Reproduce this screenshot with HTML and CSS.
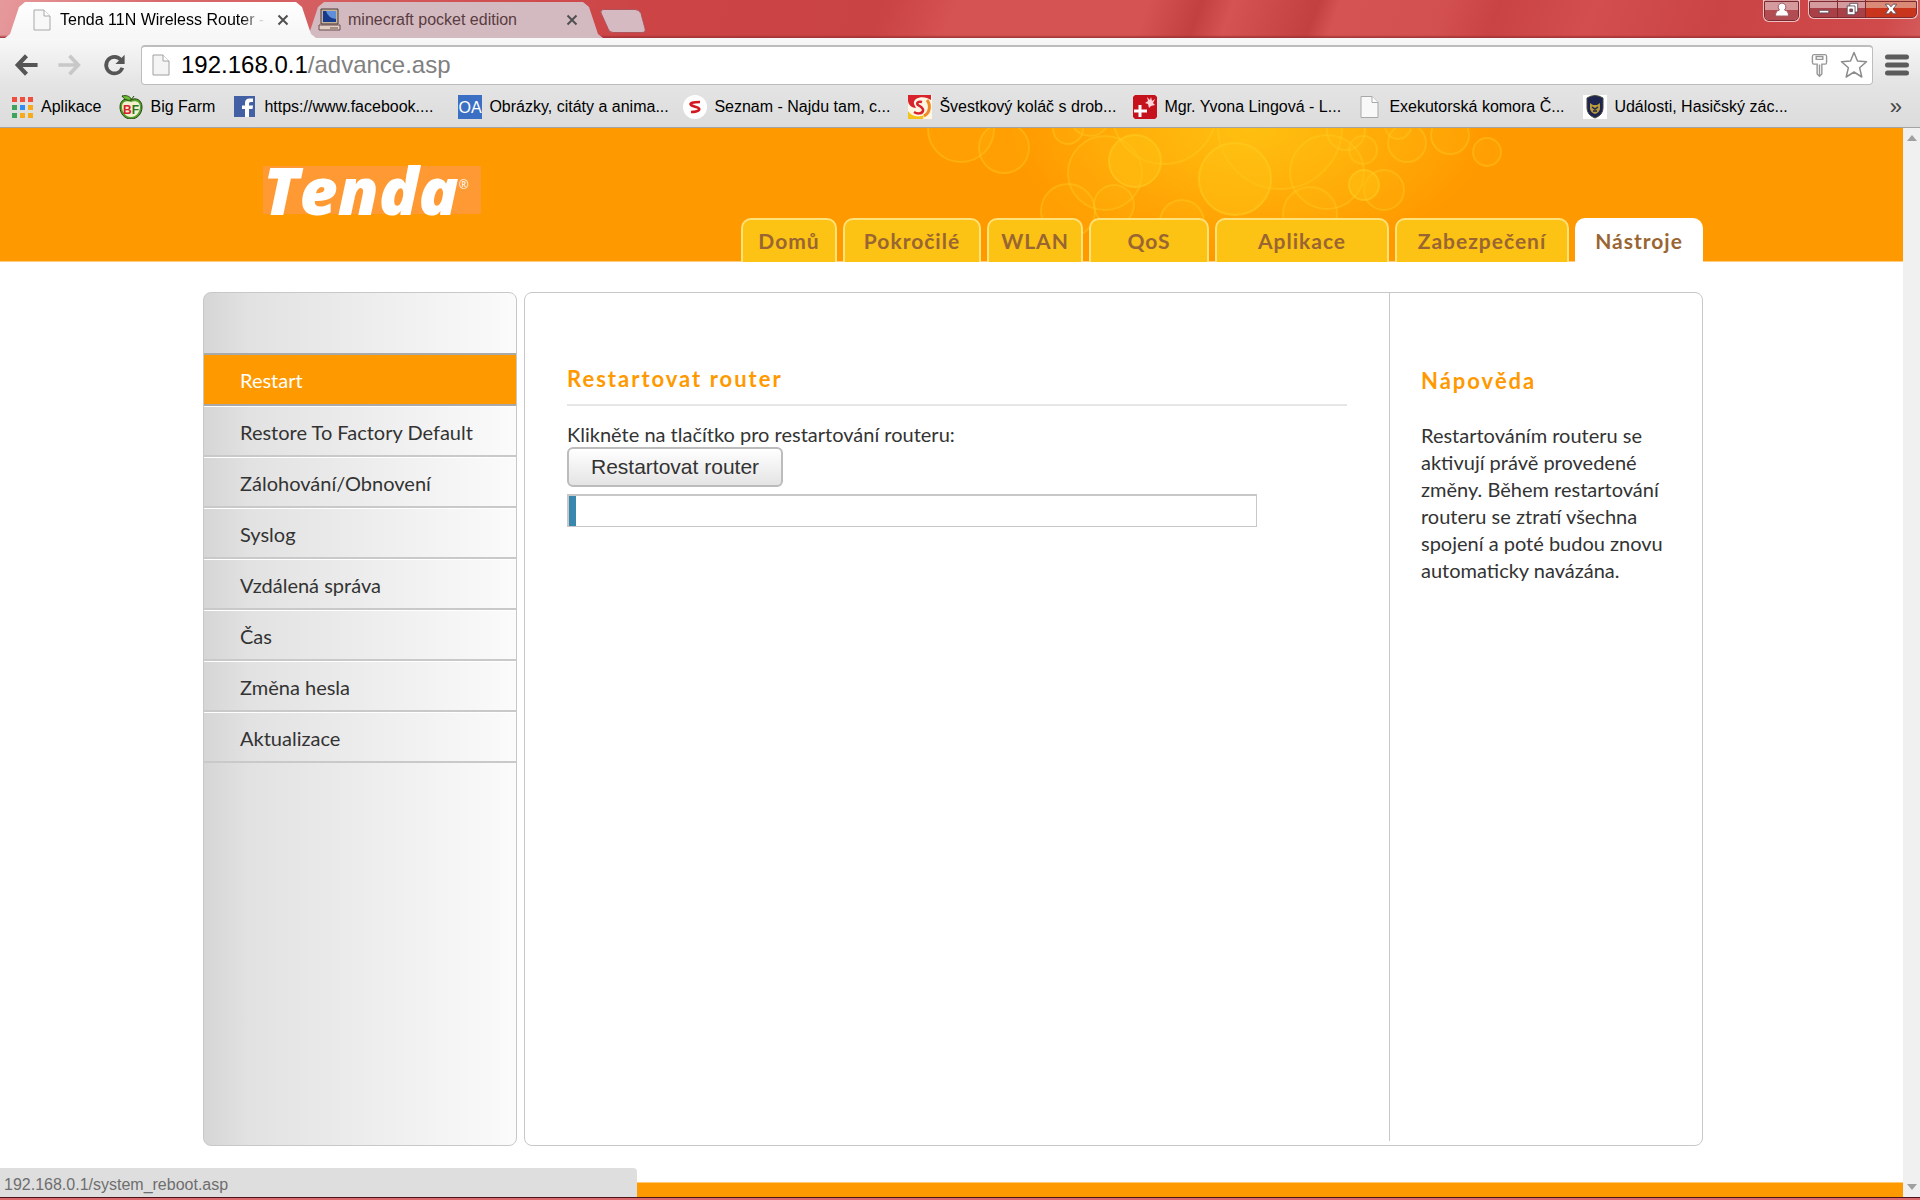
FILE: index.html
```
<!DOCTYPE html>
<html lang="cs">
<head>
  <meta charset="UTF-8" />
  <meta name="viewport" content="width=device-width, initial-scale=1" />
  <title>Tenda 11N Wireless Router</title>
  <link rel="stylesheet" href="styles.css">
</head>
<body>

  <div class="titlebar">
    <div class="tab tab-active">
      <svg class="icon-page" viewBox="0 0 18 22"><path d="M1 1h10l6 6v14H1z" fill="#f8f8f8" stroke="#a8a8a8"/><path d="M11 1v6h6" fill="#fff" stroke="#a8a8a8"/></svg>
      <span class="tab-title tab-fade">Tenda 11N Wireless Router -</span>
      <button class="tab-close" aria-label="Close tab"><svg viewBox="0 0 12 12"><path d="M1.500 1.500l9 9M10.500 1.500l-9 9"/></svg></button>
    </div>
    <div class="tab tab-second">
      <svg class="icon-pc" viewBox="0 0 24 24"><path d="M3 1h17v15H3z" fill="#c5b49a" stroke="#4a3838"/><path d="M5 3h13v11H5z" fill="#173a8c"/><path d="M8 3h10v8q-8-1-10-8z" fill="#5f8fd8"/><path d="M1 17h21v5H1z" fill="#e2cfc4" stroke="#6b4c4c"/><path d="M12 20h8" stroke="#6b4c4c"/></svg>
      <span class="tab-title">minecraft pocket edition</span>
      <button class="tab-close" aria-label="Close tab"><svg viewBox="0 0 12 12"><path d="M1.500 1.500l9 9M10.500 1.500l-9 9"/></svg></button>
    </div>
    <button class="new-tab" aria-label="New tab"><svg viewBox="0 0 48 26"><path d="M4 1.500h32q4 0 6 4l4 15q1 4-3 4H14q-4 0-5-4L2 5q-1-3 2-3.500z" fill="#d5bac2" stroke="#b0545c"/></svg></button>
    <div class="window-buttons">
      <button class="profile" aria-label="Profile"><svg viewBox="0 0 16 16"><path d="M8 1a4 4 0 0 1 2.500 7c3 1 4 2.500 4 6h-13c0-3.500 1-5 4-6A4 4 0 0 1 8 1z" fill="#fff" stroke="#a06066"/></svg></button>
      <div class="caption-buttons">
        <button class="caption" aria-label="Minimize"><svg viewBox="0 0 16 16"><path d="M2.500 9.500h11v3h-11z" fill="#fff" stroke="#5a4a55"/></svg></button>
        <button class="caption" aria-label="Restore"><svg viewBox="0 0 16 16"><path d="M5.500 1.500h9v10h-9z" fill="#fff" stroke="#5a4a55"/><path d="M2.500 4.500h9v10h-9z" fill="#fff" stroke="#5a4a55"/><path d="M5.500 8h3v3h-3z" fill="#b04850" stroke="#5a4a55"/></svg></button>
        <button class="caption caption-close" aria-label="Close"><svg viewBox="0 0 16 16"><path d="M1.500 2.500h4L8 5.500l2.500-3h4L10.500 8l4 5.500h-4L8 10.500l-2.500 3h-4l4-5.500z" fill="#fff" stroke="#5a4a55"/></svg></button>
      </div>
    </div>
  </div>

  <div class="toolbar">
    <button class="tool" aria-label="Back"><svg viewBox="0 0 26 26"><path d="M13 3L3.500 13l9.500 10M4 13h21" fill="none" stroke="#555" stroke-width="4.500"/></svg></button>
    <button class="tool" aria-label="Forward"><svg viewBox="0 0 26 26"><path d="M13 3l9.500 10L13 23M22 13H1" fill="none" stroke="#c8c8c8" stroke-width="4"/></svg></button>
    <button class="tool tool-reload" aria-label="Reload"><svg viewBox="0 0 26 26"><path d="M20 7.500A9 9 0 1 0 21.500 16" fill="none" stroke="#555" stroke-width="4"/><path d="M24 2v10H14z" fill="#555"/></svg></button>
    <div class="omnibox">
      <svg class="icon-page" viewBox="0 0 18 22"><path d="M1 1h10l6 6v14H1z" fill="#f4f4f4" stroke="#a0a0a0"/><path d="M11 1v6h6" fill="#fff" stroke="#a0a0a0"/></svg>
      <div class="url"><span class="host">192.168.0.1</span>/advance.asp</div>
      <svg class="icon-key" viewBox="0 0 18 26"><path d="M3 1.500h12q1.500 0 1.500 2v6q0 2-1.500 2h-3.500V22L9 24.500 6.500 22V11.500H3q-1.500 0-1.500-2v-6q0-2 1.500-2z" fill="#fff" stroke="#979797" stroke-width="1.500"/><path d="M5.500 3.500h7v3h-7zM9 12v11" fill="none" stroke="#979797" stroke-width="1.500"/></svg>
      <svg class="icon-star" viewBox="0 0 28 28"><path d="M14 1.500l3.500 8.500 9 .7-6.900 6 2.200 9.300L14 21l-7.800 5 2.200-9.300-6.900-6 9-.7z" fill="#fff" stroke="#8c8c8c" stroke-width="1.500" stroke-linejoin="round"/></svg>
    </div>
    <button class="tool tool-menu" aria-label="Menu"><svg viewBox="0 0 24 22"><path d="M2.500 3h19M2.500 11h19M2.500 19h19" stroke="#5c5c5c" stroke-width="5" stroke-linecap="round"/></svg></button>
  </div>

  <div class="bookmarks">
    <a class="bookmark" href="#">
      <svg viewBox="0 0 24 24"><path d="M2 2h5v5H2zM10 2h5v5h-5zM18 2h5v5h-5z" fill="#f04e3e"/><path d="M2 10h5v5H2zM2 18h5v5H2z" fill="#3fa35b"/><path d="M10 10h5v5h-5z" fill="#2f8cf0"/><path d="M18 10h5v5h-5zM10 18h5v5h-5zM18 18h5v5h-5z" fill="#f6ab1c"/></svg>
      Aplikace
    </a>
    <a class="bookmark" href="#">
      <svg viewBox="0 0 24 24"><path d="M12 5c5-3 11 0 11 7s-5 12-11 12S1 19 1 12 7 2 12 5z" fill="#58a02e" stroke="#24470f"/><path d="M12 7c5-2 9 0 9 5s-4 10-9 10-9-5-9-10 4-7 9-5z" fill="#f3efcf"/><path d="M12 4c-1-3-5-4-9-3 2 3 5 5 9 4l3-4" fill="#6cc034" stroke="#24470f"/><text class="bf-text" x="12" y="19"><tspan fill="#d6202a">B</tspan><tspan fill="#287a22">F</tspan></text></svg>
      Big Farm
    </a>
    <a class="bookmark" href="#">
      <svg viewBox="0 0 24 24"><path d="M1 1h21v21H1z" fill="#4360a5"/><path d="M12 22v-8H9v-3.500h3V8q0-4.500 4.500-4.500H20V7h-2.500Q16 7 16 8.500v2h4l-.5 3.500H16v8z" fill="#fff"/></svg>
      <span class="label">https://www.facebook....</span>
    </a>
    <a class="bookmark" href="#">
      <svg viewBox="0 0 24 24"><path d="M0 0h24v24H0z" fill="#3b6fc4"/><text class="oa-text" x="12" y="18">OA</text></svg>
      <span class="label">Obrázky, citáty a anima...</span>
    </a>
    <a class="bookmark" href="#">
      <svg viewBox="0 0 24 24"><circle cx="12" cy="12" r="12" fill="#fff"/><path d="M17 7c-7 0-11 1-9 3s10 2 8 5c-1 1-4 2-8 2" fill="none" stroke="#d3191f" stroke-width="2.500"/></svg>
      <span class="label">Seznam - Najdu tam, c...</span>
    </a>
    <a class="bookmark" href="#">
      <svg viewBox="0 0 24 24"><path d="M0 0h24v24H0z" fill="#fff6e4"/><path d="M0 0h23v5l-4-2C12 1 5 4 6 9l2 4C3 13 0 9 0 5z" fill="#d8222c"/><path d="M14 7c-4-1-6 1-4 3 3 2 6 3 5 6s-6 3-9 1" fill="none" stroke="#d8222c" stroke-width="2.500"/><path d="M19 5c4 5 3 13-3 16" fill="none" stroke="#f08a25" stroke-width="3"/><path d="M0 16c3 5 10 7 16 4l-1 4H0z" fill="#f5c21a"/></svg>
      <span class="label">Švestkový koláč s drob...</span>
    </a>
    <a class="bookmark" href="#">
      <svg viewBox="0 0 24 24"><path d="M2 0h20l2 2v20l-2 2H2l-2-2V2z" fill="#c5121d"/><path d="M7 10v12M1 16h13" stroke="#fff" stroke-width="3"/><path d="M14 2l3 3 1-3 1 4 3-2-2 4 2 2-4 1-2 2-1-4-3-1 3-2z" fill="#fbd5d7"/></svg>
      <span class="label">Mgr. Yvona Lingová - L...</span>
    </a>
    <a class="bookmark" href="#">
      <svg viewBox="0 0 24 24"><path d="M3 1.500h11l6 6v15H3z" fill="#f8f8f8" stroke="#a8a8a8"/><path d="M14 1.500v6h6" fill="#fff" stroke="#a8a8a8"/></svg>
      <span class="label">Exekutorská komora Č...</span>
    </a>
    <a class="bookmark" href="#">
      <svg viewBox="0 0 24 24"><path d="M0 0h24v24H0z" fill="#fff"/><path d="M4 3q8-5 16 0v10q0 7-8 10-8-3-8-10z" fill="#1e2450" stroke="#4a4a3a"/><path d="M7 8l3 2h4l3-2v6q-1 4-5 5-4-1-5-5z" fill="#b99a3c"/><path d="M9 12l3 2 3-2M10 16h4" fill="none" stroke="#1e2450" stroke-width="1.500"/></svg>
      <span class="label">Události, Hasičský zác...</span>
    </a>
    <button class="more" aria-label="More bookmarks">»</button>
  </div>

  <div class="viewport">
    <div class="site">
      <header class="header">
        <svg class="bubbles" viewBox="900 128 620 134">
          <defs>
            <radialGradient id="glow">
              <stop offset="0" stop-color="#ffc010"/>
              <stop offset="1" stop-color="#ff9900"/>
            </radialGradient>
          </defs>
          <ellipse cx="1250" cy="128" rx="240" ry="130" fill="url(#glow)"/>
          <g class="bubble">
            <circle cx="961" cy="129" r="33"/>
            <circle cx="1004" cy="148" r="25"/>
            <circle cx="1068" cy="129" r="15"/>
            <circle cx="1090" cy="116" r="20"/>
            <circle cx="1105" cy="173" r="37"/>
            <circle cx="1068" cy="211" r="27"/>
            <circle cx="1114" cy="205" r="20"/>
            <circle cx="1164" cy="112" r="52"/>
            <circle cx="1182" cy="222" r="22"/>
            <circle cx="1280" cy="127" r="62"/>
            <circle cx="1327" cy="172" r="37"/>
            <circle cx="1310" cy="214" r="27"/>
            <circle cx="1346" cy="131" r="19"/>
            <circle cx="1363" cy="150" r="14"/>
            <circle cx="1384" cy="190" r="20"/>
            <circle cx="1407" cy="143" r="19"/>
            <circle cx="1398" cy="126" r="13"/>
            <circle cx="1450" cy="135" r="19"/>
            <circle cx="1487" cy="152" r="14"/>
          </g>
          <g class="bubble bubble-bright">
            <circle cx="1135" cy="161" r="26"/>
            <circle cx="1235" cy="179" r="36"/>
            <circle cx="1364" cy="185" r="15"/>
          </g>
        </svg>
        <div class="container header-inner">
          <a class="logo" href="#">Tenda<sup>®</sup></a>
          <nav class="nav">
            <a href="#">Domů</a>
            <a class="nav-large" href="#">Pokročilé</a>
            <a href="#">WLAN</a>
            <a class="nav-medium" href="#">QoS</a>
            <a class="nav-wide" href="#">Aplikace</a>
            <a class="nav-wide" href="#">Zabezpečení</a>
            <a class="nav-active" href="#">Nástroje</a>
          </nav>
        </div>
      </header>

      <div class="container content">
        <ul class="menu">
          <li><a class="menu-active" href="#">Restart</a></li>
          <li><a href="#">Restore To Factory Default</a></li>
          <li><a href="#">Zálohování/Obnovení</a></li>
          <li><a href="#">Syslog</a></li>
          <li><a href="#">Vzdálená správa</a></li>
          <li><a href="#">Čas</a></li>
          <li><a href="#">Změna hesla</a></li>
          <li><a href="#">Aktualizace</a></li>
        </ul>
        <div class="panel">
          <main class="main">
            <h1>Restartovat router</h1>
            <p>Klikněte na tlačítko pro restartování routeru:</p>
            <button class="restart-button">Restartovat router</button>
            <div class="progress" role="progressbar" aria-valuenow="1" aria-label="Restart">
              <div class="progress-bar" style="width: 1%"></div>
            </div>
          </main>
          <aside class="help">
            <h2>Nápověda</h2>
            <p>Restartováním routeru se aktivují právě provedené změny. Během restartování routeru se ztratí všechna spojení a poté budou znovu automaticky navázána.</p>
          </aside>
        </div>
      </div>

      <footer class="footer"></footer>
      <div class="status">192.168.0.1/system_reboot.asp</div>
    </div>
    <div class="scrollbar">
      <svg viewBox="0 0 10 6"><path d="M5 0l5 6H0z"/></svg>
      <svg viewBox="0 0 10 6"><path d="M0 0h10L5 6z"/></svg>
    </div>
  </div>

  <div class="taskbar-edge"></div>

</body>
</html>
```

FILE: styles.css
```
* { box-sizing: border-box; }
body {
  font-family: "Liberation Sans", Arial, sans-serif;
  font-size: 16px;
  margin: 0;
  min-height: 100vh;
  display: flex;
  flex-direction: column;
  background: #fff;
  color: #000;
}
button {
  font-family: inherit;
  padding: 0;
  border: none;
  background: none;
  cursor: pointer;
}
svg { display: block; }
a { text-decoration: none; color: inherit; }

/* browser window */
.titlebar {
  height: 38px;
  display: flex;
  align-items: flex-start;
  padding: 2px 2px 0 5px;
  background:
    linear-gradient(to top, #9c3034 0, rgba(156, 48, 52, 0) 3px),
    linear-gradient(110deg, #e69a9c 0, #d96a6c 150px, #cc4446 600px, #c94244 830px, #d55352 900px, #d55352 1080px, #c24040 1130px, #d55453 1160px, #c24040 1240px, #d55353 1260px, #d35050 1360px, #c94344 1410px, #d24e4f 1500px, #ca4445 1620px, #d04a4b 1780px, #e08a88 1920px);
}
.tab {
  height: 36px;
  display: flex;
  align-items: center;
  padding: 0 27px 0 28px;
  clip-path: polygon(0 100%, 5px 32px, 14px 5px, 20px 0, calc(100% - 20px) 0, calc(100% - 14px) 5px, calc(100% - 5px) 32px, 100% 100%);
}
.tab-active {
  width: 311px;
  background: linear-gradient(#fff, #f6f6f6);
  position: relative;
  z-index: 1;
}
.tab-second {
  width: 299px;
  margin-left: -12px;
  padding: 0 25px 0 14px;
  background: #d3bac1;
  color: #5a3c40;
}
.tab-title {
  flex: 1;
  margin-left: 9px;
  white-space: nowrap;
  overflow: hidden;
}
.tab-second .tab-title { margin-left: 6px; }
.tab-fade {
  -webkit-mask-image: linear-gradient(to left, transparent, #000 24px);
  mask-image: linear-gradient(to left, transparent, #000 24px);
}
.tab-close svg {
  width: 12px;
  height: 12px;
  margin-left: 12px;
  stroke: #505050;
  stroke-width: 2;
}
.icon-page { width: 18px; height: 22px; flex: none; }
.icon-pc { width: 24px; height: 24px; flex: none; }
.new-tab { margin: 6px 0 0 -4px; }
.new-tab svg { width: 48px; height: 26px; }
.window-buttons {
  display: flex;
  gap: 8px;
  margin: -2px 0 0 auto;
}
.profile, .caption-buttons {
  border: 2px solid #f0c0c0;
  border-top: none;
  border-radius: 0 0 6px 6px;
  outline: 1px solid #7c2a30;
  outline-offset: -2px;
}
.profile {
  width: 37px;
  height: 22px;
  background: linear-gradient(#d49a9e 50%, #b04c52 50%);
}
.profile svg { width: 16px; height: 16px; margin: auto; }
.caption-buttons {
  display: flex;
  height: 19px;
  overflow: hidden;
}
.caption {
  width: 28px;
  background: linear-gradient(#d49a9e 50%, #a94047 50%);
  border-right: 1px solid #7c2a30;
}
.caption svg { width: 16px; height: 14px; margin: auto; }
.caption-close {
  width: 50px;
  border-right: none;
  background: linear-gradient(#dc8a78 50%, #c8341c 50%);
}

.toolbar {
  height: 47px;
  display: flex;
  align-items: center;
  gap: 18px;
  padding: 6px 11px 0 14px;
  background: linear-gradient(#f8f8f8, #e4e4e4);
}
.toolbar .tool svg { width: 25px; height: 24px; }
.tool-reload { margin-left: 2px; }
.toolbar .tool-menu svg { width: 24px; height: 22px; }
.tool-menu { margin-left: -6px; }
.omnibox {
  flex: 1;
  height: 40px;
  display: flex;
  align-items: center;
  padding: 0 4px 0 10px;
  margin-left: -4px;
  background: #fff;
  border: 1px solid #bdbdbd;
  border-top-width: 2px;
  border-radius: 4px;
}
.url {
  flex: 1;
  margin-left: 11px;
  font-size: 24px;
  color: #808080;
}
.host { color: #000; }
.icon-key { width: 17px; height: 25px; }
.icon-star { width: 28px; height: 28px; margin-left: 12px; }

.bookmarks {
  height: 43px;
  display: flex;
  align-items: center;
  gap: 18px;
  padding: 1px 18px 0 10px;
  background: linear-gradient(#e4e4e4, #dcdcdc);
  border-bottom: 1px solid #a3a3a3;
}
.bookmark {
  display: flex;
  align-items: center;
  gap: 7px;
  white-space: nowrap;
}
.bookmark svg { width: 24px; height: 24px; flex: none; }
.label { width: 176px; }
.bf-text {
  font: bold 12px "Liberation Sans", sans-serif;
  text-anchor: middle;
}
.oa-text {
  font: 16px "Liberation Sans", sans-serif;
  fill: #fff;
  text-anchor: middle;
}
.more {
  margin-left: auto;
  font-size: 22px;
  color: #444;
}

/* router page */
.viewport {
  flex: 1;
  display: flex;
}
.site {
  flex: 1;
  display: flex;
  flex-direction: column;
  position: relative;
  font-family: Lato, sans-serif;
  font-size: 20px;
  color: #333;
}
.container {
  width: 100%;
  max-width: 1503px;
  margin: 0 auto;
  padding-left: 3px;
}
.header {
  height: 134px;
  position: relative;
  background: #ff9900;
  border-bottom: 1px solid #ffcc80;
}
.bubbles {
  position: absolute;
  top: 0;
  left: 900px;
  width: 620px;
  height: 134px;
}
.bubble {
  fill: #ffc414;
  fill-opacity: 0.15;
  stroke: #ffcc22;
  stroke-opacity: 0.4;
  stroke-width: 2;
}
.bubble-bright {
  fill-opacity: 0.45;
  stroke-opacity: 0.6;
}
.header-inner {
  height: 134px;
  display: flex;
  justify-content: space-between;
  align-items: flex-end;
  position: relative;
}
.logo {
  width: 218px;
  height: 48px;
  margin: 0 0 48px 60px;
  background: #ff9933;
  color: #fff;
  font: italic 800 66px/46px "Open Sans", sans-serif;
  white-space: nowrap;
}
.logo sup {
  font-size: 12px;
  font-weight: 400;
  font-style: normal;
  line-height: 12px;
  vertical-align: 26px;
}
.nav {
  display: flex;
  gap: 6px;
}
.nav a {
  min-width: 96px;
  height: 44px;
  padding: 0 12px;
  border: 2px solid #ffe27a;
  border-bottom: none;
  border-radius: 10px 10px 0 0;
  background: #fcc214;
  color: #996633;
  font-size: 21px;
  font-weight: 700;
  line-height: 42px;
  letter-spacing: 1px;
  text-align: center;
}
.nav .nav-large { min-width: 138px; }
.nav .nav-medium { min-width: 120px; }
.nav .nav-wide { min-width: 174px; }
.nav .nav-active {
  min-width: 128px;
  background: #fff;
  border-color: #fff;
}

.content {
  flex: 1;
  display: flex;
  gap: 7px;
  margin-top: 30px;
  margin-bottom: 36px;
}
.menu {
  width: 314px;
  list-style: none;
  margin: 0;
  padding: 60px 0 0;
  border: 1px solid #c8c8c8;
  border-radius: 8px;
  background: linear-gradient(to right, #d6d6d6, #e2e2e2 15%, #fbfbfb);
}
.menu a {
  display: block;
  height: 51px;
  padding-left: 36px;
  border-top: 1px solid #fff;
  border-bottom: 2px solid #c9c9c9;
  line-height: 50px;
}
.menu .menu-active {
  height: 53px;
  background: #ff9900;
  border-top: 2px solid #a9a9a9;
  border-bottom-color: #a9a9a9;
  color: #fff;
}
.panel {
  flex: 1;
  display: flex;
  border: 1px solid #c8c8c8;
  border-radius: 8px;
}
.main {
  flex: 1;
  padding: 70px 42px 0;
}
h1, h2 {
  margin: 0;
  color: #ff9900;
  font-size: 22px;
  line-height: 32px;
  letter-spacing: 2px;
}
h1 {
  padding-bottom: 9px;
  border-bottom: 2px solid #e6e6e6;
}
.main p {
  margin: 16px 0 0;
  line-height: 25px;
}
.restart-button {
  display: block;
  height: 40px;
  padding: 0 22px;
  border: 2px solid #bcbcbc;
  border-radius: 6px;
  background: linear-gradient(#fff, #e4e4e4);
  color: #333;
  font: 21px "Liberation Sans", Arial, sans-serif;
}
.progress {
  height: 33px;
  margin: 7px 90px 0 0;
  border: 1px solid #c8c8c8;
  border-width: 2px 1px 1px 2px;
}
.progress-bar {
  height: 100%;
  background: #3a87ad;
}
.help {
  width: 313px;
  margin-bottom: 4px;
  padding: 72px 20px 0 31px;
  border-left: 1px solid #c8c8c8;
}
.help p {
  margin: 25px 0 0;
  line-height: 27px;
}
.footer {
  height: 15px;
  background: #ff9900;
  border-top: 1px solid #ffc878;
}
.status {
  position: absolute;
  left: 0;
  bottom: 0;
  width: 637px;
  height: 29px;
  padding-left: 4px;
  background: #dedede;
  border-radius: 0 4px 0 0;
  color: #6e6e6e;
  font: 16px/34px "Liberation Sans", Arial, sans-serif;
}
.scrollbar {
  width: 17px;
  display: flex;
  flex-direction: column;
  justify-content: space-between;
  align-items: center;
  padding: 7px 0;
  background: #f0f0f0;
}
.scrollbar svg {
  width: 10px;
  height: 6px;
  fill: #a0a0a0;
}
.taskbar-edge {
  height: 3px;
  background: #d9696d;
  border-top: 1px solid #4a1418;
}
```
